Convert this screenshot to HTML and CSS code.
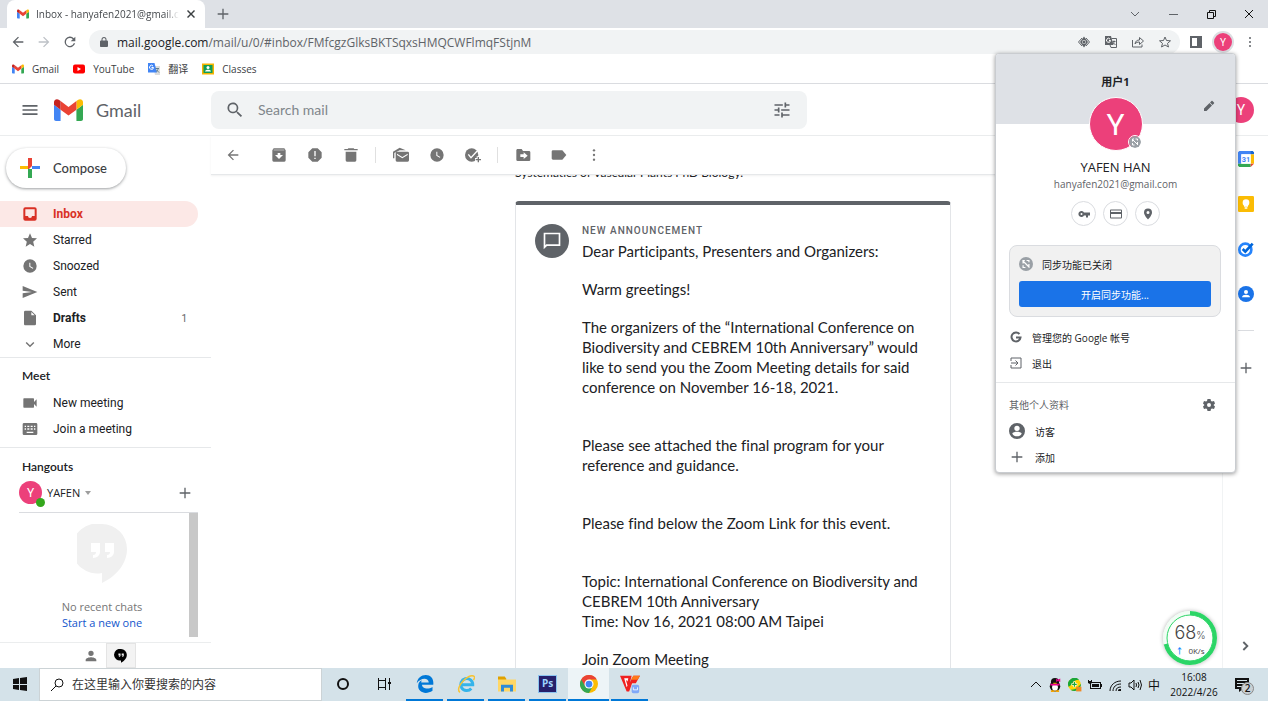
FILE: index.html
```html
<!DOCTYPE html>
<html lang="zh">
<head>
    <meta charset="UTF-8">
    <meta name="viewport" content="width=device-width, initial-scale=1.0">
    <title>Inbox - hanyafen2021@gmail.com</title>
    <link rel="stylesheet" href="styles.css">
</head>
<body>

<!-- 共用图标 -->
<svg class="sprite" aria-hidden="true">
    <symbol id="gmail" viewBox="0 0 88 66">
        <path fill="#4285f4" d="M6 66h14V32L0 17v43c0 3.300 2.700 6 6 6"/>
        <path fill="#34a853" d="M68 66h14c3.300 0 6-2.700 6-6V17L68 32"/>
        <path fill="#fbbc04" d="M68 6v26l20-15V9c0-7.400-8.500-11.600-14.400-7.200"/>
        <path fill="#ea4335" d="M20 32V6l24 18L68 6v26L44 50"/>
        <path fill="#c5221f" d="M0 9v8l20 15V6l-5.600-4.200C8.500-2.600 0 1.600 0 9"/>
    </symbol>
    <symbol id="back" viewBox="0 0 24 24"><path d="M20 11H7.800l5.600-5.600L12 4l-8 8 8 8 1.400-1.400L7.800 13H20z"/></symbol>
    <symbol id="close" viewBox="0 0 24 24"><path d="M20 6 18 4l-6 6-6-6-2 2 6 6-6 6 2 2 6-6 6 6 2-2-6-6z"/></symbol>
    <symbol id="plus" viewBox="0 0 24 24"><path d="M20 13h-7v7h-2v-7H4v-2h7V4h2v7h7z"/></symbol>
    <symbol id="more" viewBox="0 0 24 24"><circle cx="12" cy="4" r="2"/><circle cx="12" cy="12" r="2"/><circle cx="12" cy="20" r="2"/></symbol>
    <symbol id="clock" viewBox="0 0 24 24"><path d="M12 2a10 10 0 1 0 0 20 10 10 0 0 0 0-20m4.200 14.200L11 13V7h1.500v5.200l4.500 2.700z"/></symbol>
    <symbol id="person" viewBox="0 0 24 24"><path d="M12 12a4 4 0 1 0 0-8 4 4 0 0 0 0 8m0 2c-2.700 0-8 1.300-8 4v2h16v-2c0-2.700-5.300-4-8-4"/></symbol>
    <symbol id="hangouts" viewBox="0 0 50 60"><path fill-rule="evenodd" d="M25 0a25 25 0 1 0 0 49v10c15-7 25-20 25-34A25 25 0 0 0 25 0M14 19h9v9c0 3-3 6-7 6v-3c2 0 3-1 3-3h-5zm14 0h9v9c0 3-3 6-7 6v-3c2 0 3-1 3-3h-5z"/></symbol>
    <symbol id="nosync" viewBox="0 0 24 24"><circle cx="12" cy="12" r="12" fill="#9aa0a6"/><path fill="none" stroke="#fff" stroke-width="2" d="M6 6l12 12M10 6H7v5M7 14v4h4M17 18v-6M17 9V6h-4"/></symbol>
</svg>

<!-- 浏览器标签栏 -->
<div class="tabstrip">
    <div class="tab">
        <svg class="i12"><use href="#gmail"/></svg>
        <span class="tab-title">Inbox - hanyafen2021@gmail.com</span>
        <button class="icon-btn" aria-label="关闭标签页"><svg class="i12"><use href="#close"/></svg></button>
    </div>
    <button class="icon-btn new-tab" aria-label="打开新的标签页"><svg class="i16"><use href="#plus"/></svg></button>
    <div class="window-btns">
        <button class="icon-btn" aria-label="搜索标签页"><svg class="i12" viewBox="0 0 12 12"><path class="line" d="M2 4l4 4 4-4"/></svg></button>
        <button class="icon-btn" aria-label="最小化"><svg class="i12" viewBox="0 0 12 12"><path class="line" d="M2 6.500h9"/></svg></button>
        <button class="icon-btn" aria-label="还原"><svg class="i12 dark" viewBox="0 0 12 12"><path class="line" d="M2.500 4.500h6v6h-6zM4.500 4V2.500h6v6H9"/></svg></button>
        <button class="icon-btn" aria-label="关闭"><svg class="i12 dark" viewBox="0 0 12 12"><path class="line" d="M2 2l8 8M10 2l-8 8"/></svg></button>
    </div>
</div>

<!-- 地址栏 -->
<div class="toolbar">
    <button class="icon-btn" aria-label="后退"><svg class="i16"><use href="#back"/></svg></button>
    <button class="icon-btn forward" aria-label="前进"><svg class="i16"><use href="#back"/></svg></button>
    <button class="icon-btn" aria-label="刷新"><svg class="i16" viewBox="0 0 24 24"><path d="M17.700 6.300A8 8 0 1 0 19.700 14h-2.100A6 6 0 1 1 12 6c1.700 0 3.100.7 4.200 1.800L13 11h7V4z"/></svg></button>
    <div class="omnibox">
        <svg class="i12" viewBox="0 0 24 24"><path d="M18 9h-1V7A5 5 0 0 0 7 7v2H6a2 2 0 0 0-2 2v9c0 1.100.9 2 2 2h12a2 2 0 0 0 2-2v-9a2 2 0 0 0-2-2M9 7a3 3 0 0 1 6 0v2H9z"/></svg>
        <span class="url"><b>mail.google.com</b>/mail/u/0/#inbox/FMfcgzGlksBKTSqxsHMQCWFlmqFStjnM</span>
        <button class="icon-btn" aria-label="隐私"><svg class="i12" viewBox="0 0 24 24"><path fill="none" stroke="currentColor" stroke-width="2" d="M8 4l-7 8 7 8M16 4l7 8-7 8"/><path fill-rule="evenodd" d="M12 1 4 12l8 11 8-11zm0 7a4 4 0 1 1 0 8 4 4 0 0 1 0-8"/><circle cx="12" cy="12" r="3"/></svg></button>
        <button class="icon-btn" aria-label="翻译此页"><svg class="i12" viewBox="0 0 24 24"><path d="M0 0h12l5 18H0z"/><path fill="none" stroke="currentColor" stroke-width="2" d="M13 5h10v18H12l-2-5M15 11h6M18 9v2c0 3-2 5-4 6M16 13l5 5"/><path fill="none" stroke="#fff" stroke-width="2" d="M10 6a4 4 0 1 0 1 3H8"/></svg></button>
        <button class="icon-btn" aria-label="分享"><svg class="i12" viewBox="0 0 24 24"><path fill="none" stroke="currentColor" stroke-width="2" d="M1 8v14h19v-5M6 16c1-6 4-8 9-8V3l8 7-8 7v-5c-4 0-7 1-9 4z"/></svg></button>
        <button class="icon-btn" aria-label="收藏"><svg class="i12" viewBox="0 0 24 24"><path fill="none" stroke="currentColor" stroke-width="2" d="M12 2l3 7 8 .6-6 5.200L19 22l-7-4-7 4 2-7.200-6-5.200L9 9z"/></svg></button>
    </div>
    <button class="icon-btn" aria-label="侧边栏"><svg class="i12" viewBox="0 0 12 12"><path fill-rule="evenodd" d="M0 0h12v12H0zm2 2v8h5V2z"/></svg></button>
    <button class="avatar avatar-small">Y</button>
    <button class="icon-btn" aria-label="菜单"><svg class="i12"><use href="#more"/></svg></button>
</div>

<!-- 书签栏 -->
<nav class="bookmarks">
    <a href="#"><svg class="i12"><use href="#gmail"/></svg>Gmail</a>
    <a href="#"><svg class="i12" viewBox="0 0 24 24"><rect y="3" width="24" height="18" rx="4" fill="#f00"/><path fill="#fff" d="M9 8v8l7-4z"/></svg>YouTube</a>
    <a href="#"><svg class="i12" viewBox="0 0 24 24"><path fill="#ddd" d="M10 6h14v18H14z"/><path fill="#4285f4" d="M0 0h13l5 19H0z"/><path fill="none" stroke="#fff" stroke-width="2" d="M10 6a4 4 0 1 0 1 3H7"/><path fill="none" stroke="#607d8b" stroke-width="2" d="M15 11h7M20 11c0 3-2 5-3 6M17 14l5 5"/></svg>翻译</a>
    <a href="#"><svg class="i12" viewBox="0 0 24 24"><path fill="#f4b400" d="M0 1h24v22H0z"/><path fill="#0f9d58" d="M3 4h18v16H3z"/><circle cx="12" cy="9" r="3" fill="#fff"/><path fill="#fff" d="M6 17c0-5 12-5 12 0z"/></svg>Classes</a>
</nav>

<!-- Gmail 页面 -->
<div class="app">
    <header class="header">
        <button class="icon-btn" aria-label="Main menu"><svg class="i20" viewBox="0 0 24 24"><path d="M3 18h18v-2H3zm0-5h18v-2H3zm0-7v2h18V6z"/></svg></button>
        <a class="brand" href="#"><svg class="brand-logo"><use href="#gmail"/></svg>Gmail</a>
        <form class="search">
            <svg class="i20" viewBox="0 0 24 24"><path d="M15.500 14h-.8l-.3-.3A6.500 6.500 0 1 0 13.700 14.400l.3.300v.8l5 5 1.500-1.500zm-6 0a4.500 4.500 0 1 1 0-9 4.500 4.500 0 0 1 0 9"/></svg>
            <input type="text" placeholder="Search mail" aria-label="Search mail">
            <button type="button" class="icon-btn" aria-label="Search options"><svg class="i20" viewBox="0 0 24 24"><path d="M3 17v2h6v-2zM3 5v2h10V5zm10 16v-2h8v-2h-8v-2h-2v6zM7 9v2H3v2h4v2h2V9zm14 4v-2H11v2zm-6-4h2V7h4V5h-4V3h-2z"/></svg></button>
        </form>
        <button class="avatar avatar-account">Y</button>
    </header>

    <div class="workspace">
        <aside class="sidebar">
            <button class="compose">
                <svg class="i20" viewBox="0 0 20 20"><path fill="#ea4335" d="M8 0h4v8l-4 4z"/><path fill="#4285f4" d="M12 8h8v3h-8z"/><path fill="#34a853" d="M8 11h4v9H8z"/><path fill="#fbbc04" d="M0 8h8v3H0z"/></svg>
                Compose
            </button>
            <nav class="folders">
                <a class="row active" href="#"><svg class="i16" viewBox="0 0 24 24"><path d="M19 2H5a3 3 0 0 0-3 3v14a3 3 0 0 0 3 3h14a3 3 0 0 0 3-3V5a3 3 0 0 0-3-3m0 13h-4a3 3 0 0 1-6 0H5V5h14z"/></svg>Inbox</a>
                <a class="row" href="#"><svg class="i16" viewBox="0 0 24 24"><path d="M12 18l6.500 4-1.700-7.500 5.700-5-7.500-.6L12 2 9 8.900l-7.500.6 5.700 5L5.500 22z"/></svg>Starred</a>
                <a class="row" href="#"><svg class="i16"><use href="#clock"/></svg>Snoozed</a>
                <a class="row" href="#"><svg class="i16" viewBox="0 0 24 24"><path d="M1 21l22-9L1 3v7l14 2-14 2z"/></svg>Sent</a>
                <a class="row drafts" href="#"><svg class="i16" viewBox="0 0 24 24"><path d="M14 1H5a2 2 0 0 0-2 2v18c0 1.100.9 2 2 2h14a2 2 0 0 0 2-2V8zm0 7V3l5 5z"/></svg>Drafts<span class="count">1</span></a>
                <a class="row" href="#"><svg class="i16" viewBox="0 0 24 24"><path d="M17 9l-5 5-5-5-1.500 1.500L12 17l6.500-6.500z"/></svg>More</a>
            </nav>
            <section class="meet">
                <h2>Meet</h2>
                <a class="row" href="#"><svg class="i16" viewBox="0 0 24 24"><path d="M18 10.500V6a1 1 0 0 0-1-1H3a1 1 0 0 0-1 1v12c0 .6.400 1 1 1h14a1 1 0 0 0 1-1v-4.500l4 4v-11z"/></svg>New meeting</a>
                <a class="row" href="#"><svg class="i16" viewBox="0 0 24 24"><path fill-rule="evenodd" d="M3 3h18a2 2 0 0 1 2 2v14a2 2 0 0 1-2 2H3a2 2 0 0 1-2-2V5c0-1.100.9-2 2-2m1 4v2h2V7zm4 0v2h3V7zm5 0v2h3V7zm5 0v2h2V7zM4 11v2h2v-2zm4 0v2h3v-2zm5 0v2h3v-2zm5 0v2h2v-2zM7 16v2h10v-2z"/></svg>Join a meeting</a>
            </section>
            <section class="hangouts">
                <h2>Hangouts</h2>
                <div class="hangouts-user">
                    <span class="avatar avatar-chat">Y<i class="online"></i></span>
                    YAFEN
                    <svg class="caret" viewBox="0 0 6 4"><path d="M0 0h6L3 4z"/></svg>
                    <button class="icon-btn" aria-label="New conversation"><svg class="i16"><use href="#plus"/></svg></button>
                </div>
                <div class="chats">
                    <div class="chats-empty">
                        <svg class="chats-logo"><use href="#hangouts"/></svg>
                        <p>No recent chats</p>
                        <a href="#">Start a new one</a>
                    </div>
                    <div class="scrollbar"></div>
                </div>
            </section>
            <div class="chat-tabs">
                <button class="icon-btn" aria-label="Contacts"><svg class="i16"><use href="#person"/></svg></button>
                <button class="icon-btn selected" aria-label="Hangouts"><svg class="i14"><use href="#hangouts"/></svg></button>
            </div>
        </aside>

        <main class="mail">
            <div class="actions">
                <button class="icon-btn act-back" aria-label="Back to Inbox"><svg class="i16"><use href="#back"/></svg></button>
                <button class="icon-btn" aria-label="Archive"><svg class="i16" viewBox="0 0 24 24"><path fill-rule="evenodd" d="M4 2h16l2 3v15a2 2 0 0 1-2 2H4a2 2 0 0 1-2-2V5zm0 2v1h16V4zm6 5v3H6l6 6 6-6h-4V9z"/></svg></button>
                <button class="icon-btn" aria-label="Report spam"><svg class="i16" viewBox="0 0 24 24"><path fill-rule="evenodd" d="M8 2h8l6 6v8l-6 6H8l-6-6V8zm3 4v8h2V6zm0 10v2h2v-2z"/></svg></button>
                <button class="icon-btn" aria-label="Delete"><svg class="i16" viewBox="0 0 24 24"><path d="M4 7h16v13a2 2 0 0 1-2 2H6a2 2 0 0 1-2-2zM8 2h8l1 1h5v2H2V3h5z"/></svg></button>
                <span class="sep"></span>
                <button class="icon-btn" aria-label="Mark as unread"><svg class="i16" viewBox="0 0 24 24"><path d="M0 17V7l10-6 9 4h-9L2 9v8z"/><path fill-rule="evenodd" d="M6 7h16a2 2 0 0 1 2 2v11a2 2 0 0 1-2 2H6a2 2 0 0 1-2-2V9c0-1.100.9-2 2-2m0 3v2l8 5 8-5v-2l-8 5z"/></svg></button>
                <button class="icon-btn" aria-label="Snooze"><svg class="i16"><use href="#clock"/></svg></button>
                <button class="icon-btn" aria-label="Add to tasks"><svg class="i16" viewBox="0 0 24 24"><circle cx="10" cy="12" r="10"/><path fill="none" stroke="#fff" stroke-width="2" d="M5 11l4 5L21 3"/><path stroke="#fff" stroke-width="5" d="M20 14v10M15 19h9"/><path fill="none" stroke="currentColor" stroke-width="2" d="M20 15v8M16 19h8"/></svg></button>
                <span class="sep"></span>
                <button class="icon-btn" aria-label="Move to"><svg class="i16" viewBox="0 0 24 24"><path fill-rule="evenodd" d="M4 3h6l2 3h9a2 2 0 0 1 2 2v11a2 2 0 0 1-2 2H4a2 2 0 0 1-2-2V5c0-1.100.9-2 2-2m9 5v3H8v4h5v3l6-5z"/></svg></button>
                <button class="icon-btn" aria-label="Labels"><svg class="i16" viewBox="0 0 24 24"><path d="M17 5H3a2 2 0 0 0-2 2v10c0 1.100.9 2 2 2h14l6-7z"/></svg></button>
                <button class="icon-btn" aria-label="More"><svg class="i14"><use href="#more"/></svg></button>
            </div>
            <div class="message">
                <div class="message-inner">
                    <p class="cut-line">Systematics of Vascular Plants PhD Biology.</p>
                    <article class="card">
                        <span class="card-icon"><svg class="i20" viewBox="0 0 24 24"><path d="M20 2H2v20l4-4h16V2zm0 14H5l-1 1V4h16z"/></svg></span>
                        <div class="card-body">
                            <h3>NEW ANNOUNCEMENT</h3>
                            <p>Dear Participants, Presenters and Organizers:</p>
                            <p>Warm greetings!</p>
                            <p class="wide">The organizers of the “International Conference on<br>Biodiversity and CEBREM 10th Anniversary” would<br>like to send you the Zoom Meeting details for said<br>conference on November 16-18, 2021.</p>
                            <p class="wide">Please see attached the final program for your<br>reference and guidance.</p>
                            <p class="wide">Please find below the Zoom Link for this event.</p>
                            <p>Topic: International Conference on Biodiversity and<br>CEBREM 10th Anniversary<br>Time: Nov 16, 2021 08:00 AM Taipei</p>
                            <p>Join Zoom Meeting</p>
                        </div>
                    </article>
                </div>
            </div>
        </main>

        <aside class="rail">
            <a href="#" aria-label="Calendar"><svg class="i16" viewBox="0 0 24 24"><path fill="#4285f4" d="M2 0h20v5H5v14H0V2z"/><path fill="#1967d2" d="M19 0h3l2 2v3h-5z"/><path fill="#fbbc04" d="M19 5h5v14h-5z"/><path fill="#34a853" d="M0 19h19v5H2l-2-2z"/><path fill="#ea4335" d="M19 19h5l-5 5z"/><path fill="#fff" d="M5 5h14v14H5z"/><text x="12" y="16" text-anchor="middle" font-size="11" font-weight="700" fill="#4285f4">31</text></svg></a>
            <a href="#" aria-label="Keep"><svg class="i16" viewBox="0 0 24 24"><rect width="24" height="24" rx="2" fill="#fbbc04"/><circle cx="12" cy="10" r="5" fill="#fff"/><path fill="#fff" d="M9 13h6v3H9zM10 17h4v2h-4z"/></svg></a>
            <a href="#" aria-label="Tasks"><svg class="i16" viewBox="0 0 24 24"><circle cx="11" cy="13" r="9" fill="none" stroke="#2684fc" stroke-width="4"/><path fill="none" stroke="#0066da" stroke-width="4" d="M7 12l4 4L22 4"/></svg></a>
            <a href="#" aria-label="Contacts"><svg class="i16" viewBox="0 0 24 24"><circle cx="12" cy="12" r="12" fill="#1a73e8"/><circle cx="12" cy="9" r="3" fill="#fff"/><path fill="#fff" d="M6 17c0-5 12-5 12 0z"/></svg></a>
            <hr>
            <button class="icon-btn" aria-label="Get add-ons"><svg class="i16"><use href="#plus"/></svg></button>
            <button class="icon-btn rail-toggle" aria-label="Hide side panel"><svg class="i16" viewBox="0 0 24 24"><path d="M7 7 9 5l7 7-7 7-2-2 5-5z"/></svg></button>
        </aside>
    </div>
</div>

<!-- 任务栏 -->
<footer class="taskbar">
    <button class="task start" aria-label="开始"><svg class="i14" viewBox="0 0 14 14"><path d="M0 2l6-1v6H0zM7 1l7-1v7H7zM0 8h6v5l-6-1zM7 8h7v6l-7-1z"/></svg></button>
    <label class="task-search">
        <svg class="i14" viewBox="0 0 14 14"><circle class="line" cx="9" cy="5" r="4"/><path class="line" d="M6 8l-5 5"/></svg>
        <input type="text" placeholder="在这里输入你要搜索的内容">
    </label>
    <button class="task" aria-label="Cortana"><svg class="i14" viewBox="0 0 14 14"><circle cx="7" cy="7" r="5" fill="none" stroke="#111" stroke-width="2"/></svg></button>
    <button class="task" aria-label="任务视图"><svg class="i14" viewBox="0 0 14 14"><path class="line" d="M1.500 1v12M8.500 1v12M1 3.500h8M1 10.500h8M12.500 1v12"/><path d="M11 5h3v2h-3z"/></svg></button>
    <button class="task open" aria-label="Edge"><svg class="i18" viewBox="0 0 24 24"><path fill="#0078d7" d="M1 11C2 4 7 0 13 0c7 0 11 5 10 13H8c0 5 8 7 14 3v5C13 27 2 23 3 14c0-3 2-6 5-7-1 1-1 2-1 3h10c0-7-11-7-16 1"/></svg></button>
    <button class="task open" aria-label="Internet Explorer"><svg class="i18" viewBox="0 0 24 24"><path fill="none" stroke="#35b4ea" stroke-width="4" d="M6 13h15a8 8 0 1 0-2 5"/><path fill="none" stroke="#f6c437" stroke-width="2" d="M4 23C-4 18 16-4 23 2c1 1 0 3-1 5"/></svg></button>
    <button class="task open" aria-label="文件资源管理器"><svg class="i18" viewBox="0 0 24 24"><path fill="#e0a100" d="M0 2h9l2 3v4H0z"/><path fill="#ffd766" d="M0 6h24v16H0z"/><path fill="#2f8bd8" d="M4 22v-9h16v9h-4v-5H8v5z"/></svg></button>
    <button class="task open" aria-label="Photoshop"><span class="ps">Ps</span></button>
    <button class="task open current" aria-label="Chrome"><svg class="i18" viewBox="0 0 24 24"><circle cx="12" cy="12" r="12" fill="#fbbc04"/><path fill="#34a853" d="M1.600 6A12 12 0 0 0 12 24l5-9-5-3z"/><path fill="#ea4335" d="M12 6h10.400A12 12 0 0 0 1.600 6L7 15z"/><circle cx="12" cy="12" r="6" fill="#fff"/><circle cx="12" cy="12" r="4.500" fill="#4285f4"/></svg></button>
    <button class="task open" aria-label="WPS"><svg class="i20" viewBox="0 0 24 24"><path fill="#f02020" d="M0 2h14l-2 8 4-8h8l-5 9h-5l2-4L11 21H8z"/><path fill="#fff" d="M5 5h5l-1 4-2-2 2 7-1 2z"/><path fill="#ff7a1a" d="M16 2h8l-3 5h-8z"/><rect x="14" y="13" width="9" height="10" rx="2" fill="#7fa8f8"/><path fill="none" stroke="#fff" d="M16 16v3h5v-3"/></svg></button>

    <div class="tray">
        <button class="icon-btn dark" aria-label="显示隐藏的图标"><svg class="i12" viewBox="0 0 12 12"><path class="line" d="M1 8l5-5 5 5"/></svg></button>
        <svg class="i14" viewBox="0 0 24 24"><ellipse cx="12" cy="14" rx="9" ry="9" fill="#111"/><circle cx="12" cy="7" r="7" fill="#111"/><ellipse cx="12" cy="16" rx="5" ry="6" fill="#fff"/><path fill="#ec008c" d="M4 10h16v3H4zM14 1l3 2 4-2v6l-4-2-3 2z"/><path fill="#f7a600" d="M9 8h6v2H9zM5 21h6v3H5zM13 21h6v3h-6z"/></svg>
        <svg class="i14" viewBox="0 0 24 24"><circle cx="11" cy="11" r="11" fill="#ffd500"/><path fill="#19a63a" d="M1 15A11 11 0 0 1 19 3C8 3 8 12 1 15M4 20c8 1 14-4 18-10 1 8-8 16-18 10"/><path fill="#fff" d="M9 6h4v3h3v4h-3v3H9v-3H6V9h3z"/><path fill="#19a63a" d="M10 7h2v3h3v2h-3v3h-2v-3H7v-2h3z"/><path fill="#f08a24" d="M14 15h9v8h-9z"/></svg>
        <svg class="i14" viewBox="0 0 14 14"><path fill-rule="evenodd" d="M2 4h11v2h1v3h-1v2H2zm1 1v5h9V5z"/><path d="M4 6h7v3H4zM0 2h1v1h2V2h1v3L2 6 0 5z"/></svg>
        <svg class="i14" viewBox="0 0 14 14"><path class="line" d="M2 13C2 7 7 3 13 3M5 13c0-4 3-7 8-7M8 13c0-3 2-4 5-4"/><path d="M10 13c0-2 1-2 3-2v2z"/></svg>
        <svg class="i14" viewBox="0 0 14 14"><path class="line" d="M1 5h2l3-3v10L3 9H1zM8 5q1 2 0 4M10 4q2 3 0 6M12 2q3 5 0 10"/></svg>
        <span class="ime">中</span>
        <div class="datetime">16:08<br>2022/4/26</div>
        <button class="icon-btn notify" aria-label="通知"><svg class="i16" viewBox="0 0 16 16"><path fill-rule="evenodd" d="M1 1h14v11H9l-4 3v-3H1zm2 2v1h10V3zm0 3v1h10V6zm0 3v1h7V9z"/></svg><span class="badge">2</span></button>
    </div>
</footer>

<!-- 个人资料菜单 -->
<div class="profile">
    <div class="profile-band">
        用户1
        <button class="icon-btn" aria-label="编辑"><svg class="i12" viewBox="0 0 24 24"><path d="M2 17v5h5L18 11l-5-5zM22 7c.6-.6.6-1.400 0-2l-3-3c-.6-.6-1.400-.6-2 0l-3 3 5 5z"/></svg></button>
    </div>
    <div class="profile-card">
        <span class="avatar avatar-big">Y<svg class="sync-badge"><use href="#nosync"/></svg></span>
        <div class="profile-name">YAFEN HAN</div>
        <div class="profile-mail">hanyafen2021@gmail.com</div>
        <div class="shortcuts">
            <button aria-label="密码"><svg class="i12" viewBox="0 0 24 24"><path fill-rule="evenodd" d="M12 9a6 6 0 1 0 0 6h4v4h4v-4h4V9zm-5 1a2 2 0 1 1 0 4 2 2 0 0 1 0-4"/></svg></button>
            <button aria-label="付款方式"><svg class="i12" viewBox="0 0 24 24"><path fill-rule="evenodd" d="M2 3h20a2 2 0 0 1 2 2v14a2 2 0 0 1-2 2H2a2 2 0 0 1-2-2V5c0-1.100.9-2 2-2m0 2v3h20V5zm0 7v7h20v-7z"/></svg></button>
            <button aria-label="地址"><svg class="i12" viewBox="0 0 24 24"><path fill-rule="evenodd" d="M12 1a8 8 0 0 0-8 8c0 6 8 14 8 14s8-8 8-14a8 8 0 0 0-8-8m0 5a3 3 0 1 1 0 6 3 3 0 0 1 0-6"/></svg></button>
        </div>
    </div>
    <div class="sync">
        <div class="sync-state"><svg class="i14"><use href="#nosync"/></svg>同步功能已关闭</div>
        <button class="sync-btn">开启同步功能...</button>
    </div>
    <button class="menu-item"><svg class="i12" viewBox="0 0 24 24"><path fill="none" stroke="currentColor" stroke-width="4" d="M19 6a9 9 0 1 0 2 7h-9"/></svg>管理您的 Google 帐号</button>
    <button class="menu-item"><svg class="i12" viewBox="0 0 24 24"><path fill="none" stroke="currentColor" stroke-width="2" d="M2 8V2h20v20H2v-6M2 12h13M11 7l5 5-5 5"/></svg>退出</button>
    <div class="others">
        <span>其他个人资料</span>
        <button class="icon-btn" aria-label="管理个人资料"><svg class="i12" viewBox="0 0 24 24"><path fill-rule="evenodd" d="M9 0h6l1 4 2 1 4-1 2 5-3 3 3 3-2 5-4-1-2 1-1 4H9l-1-4-2-1-4 1-2-5 3-3-3-3 2-5 4 1 2-1zm3 8a4 4 0 1 0 0 8 4 4 0 0 0 0-8"/></svg></button>
    </div>
    <button class="menu-item other"><svg class="i16" viewBox="0 0 24 24"><path fill-rule="evenodd" d="M12 0a12 12 0 1 0 0 24 12 12 0 0 0 0-24m0 4a4 4 0 1 1 0 8 4 4 0 0 1 0-8m0 16c-3 0-5.500-1.400-7-4 0-2.300 4.700-3 7-3s7 .7 7 3c-1.500 2.600-4 4-7 4"/></svg>访客</button>
    <button class="menu-item other"><svg class="i16"><use href="#plus"/></svg>添加</button>
</div>

<!-- 网速悬浮球 -->
<div class="speed">
    <svg class="speed-ring" viewBox="0 0 54 54"><circle cx="27" cy="27" r="25" fill="none" stroke="#2bd566" stroke-width="4" stroke-dasharray="111 157" transform="rotate(-90 27 27)"/><circle cx="27" cy="27" r="23" fill="none" stroke="#2bd566"/></svg>
    <div class="speed-value">68<small>%</small></div>
    <div class="speed-rate"><b>↑</b>0K/s</div>
</div>

</body>
</html>
```
FILE: styles.css
```css
* {
    box-sizing: border-box;
}
body {
    margin: 0;
    height: 100vh;
    display: flex;
    flex-direction: column;
    overflow: hidden;
    position: relative;
    background-color: #fff;
    color: #202124;
    font-family: 'Open Sans', 'Noto Sans CJK SC', sans-serif;
    font-size: 11px;
}
button, input {
    font-family: inherit;
    font-size: inherit;
    color: inherit;
    border: none;
    background: none;
    padding: 0;
    margin: 0;
    outline: none;
}
button {
    cursor: pointer;
}
a {
    color: inherit;
    text-decoration: none;
}
p, h2, h3 {
    margin: 0;
}
svg {
    display: block;
    flex-shrink: 0;
    fill: currentColor;
}
.sprite {
    position: absolute;
    width: 0;
    height: 0;
}
.line {
    fill: none;
    stroke: currentColor;
}
.i12 { width: 12px; height: 12px; }
.i14 { width: 14px; height: 14px; }
.i16 { width: 16px; height: 16px; }
.i18 { width: 18px; height: 18px; }
.i20 { width: 20px; height: 20px; }
.icon-btn {
    display: flex;
    align-items: center;
    justify-content: center;
    flex-shrink: 0;
    color: #5f6368;
}
.dark {
    color: #111;
}
.avatar {
    display: flex;
    align-items: center;
    justify-content: center;
    flex-shrink: 0;
    border-radius: 50%;
    background-color: #ec407a;
    color: #fff;
    font-family: Roboto, sans-serif;
}

/* 标签栏 */
.tabstrip {
    display: flex;
    align-items: center;
    height: 28px;
    flex-shrink: 0;
    padding-left: 7px;
    background-color: #dee1e6;
}
.tab {
    display: flex;
    align-items: center;
    width: 198px;
    height: 28px;
    padding: 0 8px 0 10px;
    border-radius: 8px 8px 0 0;
    background-color: #fff;
}
.tab-title {
    flex: 1;
    margin: 0 6px 0 7px;
    overflow: hidden;
    white-space: nowrap;
    color: #45494d;
    font-size: 10px;
    mask-image: linear-gradient(to right, #000 90%, transparent);
}
.tab .icon-btn {
    color: #3c4043;
}
.new-tab {
    margin-left: 10px;
}
.window-btns {
    display: flex;
    gap: 26px;
    margin-left: auto;
    padding-right: 13px;
}

/* 地址栏 */
.toolbar {
    display: flex;
    align-items: center;
    gap: 10px;
    height: 28px;
    flex-shrink: 0;
    padding: 0 12px 0 10px;
}
.forward {
    color: #bdc1c6;
    transform: scaleX(-1);
}
.omnibox {
    display: flex;
    align-items: center;
    flex: 1;
    gap: 15px;
    height: 24px;
    margin-left: 1px;
    padding: 0 9px;
    border-radius: 12px;
    background-color: #f1f3f4;
    color: #5f6368;
}
.omnibox > svg {
    margin-right: -8px;
}
.url {
    flex: 1;
    font-size: 12px;
    white-space: nowrap;
    overflow: hidden;
}
.url b {
    font-weight: 400;
    color: #202124;
}
.avatar-small {
    width: 18px;
    height: 18px;
    margin: 0 2px;
    font-size: 10px;
    box-shadow: 0 0 0 2px #dcdee2;
}
.bookmarks {
    display: flex;
    align-items: center;
    gap: 14px;
    height: 28px;
    flex-shrink: 0;
    padding: 0 12px 2px;
    border-bottom: 1px solid #dadce0;
    color: #3c4043;
    font-size: 10px;
}
.bookmarks a {
    display: flex;
    align-items: center;
    gap: 8px;
}

/* Gmail */
.app {
    display: flex;
    flex-direction: column;
    flex: 1;
    min-height: 0;
    font-family: Roboto, sans-serif;
}
.header {
    display: flex;
    align-items: center;
    height: 52px;
    flex-shrink: 0;
    padding: 0 14px 0 20px;
    border-bottom: 1px solid #ebedee;
}
.brand {
    display: flex;
    align-items: center;
    gap: 13px;
    width: 157px;
    margin-left: 14px;
    color: #5f6368;
    font-family: Lato, sans-serif;
    font-size: 18px;
}
.brand-logo {
    width: 29px;
    height: 22px;
}
.search {
    display: flex;
    align-items: center;
    width: 47vw;
    height: 38px;
    padding: 0 15px 0 14px;
    border-radius: 8px;
    background-color: #f1f3f4;
    color: #5f6368;
}
.search input {
    flex: 1;
    min-width: 0;
    margin-left: 13px;
    font-family: Lato, sans-serif;
    font-size: 14px;
}
.search input::placeholder {
    color: #80868b;
}
.avatar-account {
    width: 26px;
    height: 26px;
    margin-left: auto;
    font-size: 14px;
}
.workspace {
    display: flex;
    flex: 1;
    min-height: 0;
}

/* 左侧栏 */
.sidebar {
    display: flex;
    flex-direction: column;
    width: 211px;
    flex-shrink: 0;
    font-size: 12px;
}
.compose {
    display: flex;
    align-items: center;
    gap: 13px;
    width: 120px;
    height: 40px;
    margin: 12px 0 13px 6px;
    padding-left: 14px;
    flex-shrink: 0;
    border-radius: 20px;
    color: #3c4043;
    font-family: Lato, sans-serif;
    font-size: 13px;
    font-weight: 500;
    box-shadow: 0 1px 3px rgba(60, 64, 67, 0.5);
}
.row {
    display: flex;
    align-items: center;
    gap: 15px;
    height: 26px;
    margin-right: 13px;
    padding: 0 11px 0 22px;
    border-radius: 0 13px 13px 0;
}
.row svg {
    color: #747474;
}
.row.active {
    background-color: #fce8e6;
    color: #d93025;
    font-weight: 700;
}
.row.active svg {
    color: #d93025;
}
.drafts {
    font-weight: 700;
}
.count {
    margin-left: auto;
    color: #5f6368;
    font-size: 10px;
    font-weight: 400;
}
.meet, .hangouts {
    border-top: 1px solid #e6e8ea;
}
.meet {
    padding-bottom: 5px;
}
.sidebar h2 {
    padding: 8px 22px 4px;
    font-family: Lato, sans-serif;
    font-size: 12px;
    font-weight: 600;
    line-height: 20px;
}
.hangouts {
    display: flex;
    flex-direction: column;
    flex: 1;
    min-height: 0;
    padding-top: 1px;
}
.hangouts-user {
    display: flex;
    align-items: center;
    gap: 5px;
    height: 32px;
    flex-shrink: 0;
    margin: 0 13px 0 19px;
    padding-bottom: 8px;
    border-bottom: 1px solid #dadce0;
    font-family: 'Open Sans', sans-serif;
    font-size: 11px;
}
.hangouts-user .icon-btn {
    margin: 0 5px 0 auto;
}
.avatar-chat {
    position: relative;
    width: 23px;
    height: 23px;
    font-size: 12px;
}
.online {
    position: absolute;
    right: -3px;
    bottom: -3px;
    width: 9px;
    height: 9px;
    border-radius: 50%;
    background-color: #34a71c;
}
.caret {
    width: 6px;
    height: 4px;
    color: #9e9e9e;
}
.chats {
    display: flex;
    flex: 1;
    min-height: 0;
    margin: 0 13px 5px 19px;
}
.chats-empty {
    display: flex;
    flex-direction: column;
    align-items: center;
    flex: 1;
    padding: 11px 4px 0 0;
    color: #757575;
    font-family: 'Open Sans', sans-serif;
    font-size: 11px;
    line-height: 16px;
}
.chats-logo {
    width: 50px;
    height: 60px;
    margin-bottom: 15px;
    color: #f0f0f0;
}
.chats-empty a {
    color: #1155cc;
}
.scrollbar {
    width: 9px;
    background-color: #c8c8c8;
}
.chat-tabs {
    display: flex;
    justify-content: center;
    height: 26px;
    flex-shrink: 0;
    border-top: 1px solid #ebedee;
}
.chat-tabs .icon-btn {
    width: 30px;
    color: #757575;
}
.chat-tabs .selected {
    border: 1px solid #e4e4e4;
    background-color: #f3f3f3;
    color: #000;
}

/* 邮件内容 */
.mail {
    display: flex;
    flex-direction: column;
    flex: 1;
    min-width: 0;
}
.actions {
    display: flex;
    align-items: center;
    gap: 20px;
    height: 39px;
    flex-shrink: 0;
    padding-left: 14px;
    border-bottom: 1px solid #e6e8ea;
    box-shadow: 0 1px 2px rgba(0, 0, 0, 0.06);
}
.actions .icon-btn {
    color: #757575;
}
.act-back {
    margin-right: 10px;
}
.sep {
    width: 1px;
    height: 16px;
    margin: 0 -3px 0 -4px;
    background-color: #e0e0e0;
}
.message {
    flex: 1;
    min-height: 0;
    overflow: hidden;
    padding-left: 33px;
}
.message-inner {
    display: flex;
    flex-direction: column;
    width: 436px;
    max-width: 100%;
    margin: 0 auto;
    font-family: Lato, sans-serif;
    font-variant-ligatures: none;
}
.cut-line {
    margin: -12px 0 18px;
    font-size: 12px;
    line-height: 20px;
}
.card {
    display: flex;
    gap: 13px;
    padding: 19px 20px 40px 19px;
    border: 1px solid #e3e5e8;
    border-top: 4px solid #5f6368;
    border-radius: 4px 4px 0 0;
}
.card-icon {
    display: flex;
    align-items: center;
    justify-content: center;
    width: 34px;
    height: 34px;
    flex-shrink: 0;
    border-radius: 50%;
    background-color: #5f6368;
    color: #fff;
}
.card-body {
    white-space: nowrap;
    font-size: 15px;
    line-height: 20px;
}
.card-body h3 {
    margin-bottom: 4px;
    color: #5f6368;
    font-family: Roboto, sans-serif;
    font-size: 10px;
    font-weight: 500;
    line-height: 13px;
    letter-spacing: 1px;
}
.card-body p {
    margin-bottom: 18px;
}
.card-body p.wide {
    margin-bottom: 38px;
}

/* 右侧栏 */
.rail {
    display: flex;
    flex-direction: column;
    align-items: center;
    gap: 29px;
    width: 46px;
    flex-shrink: 0;
    padding: 15px 0 14px;
    border-left: 1px solid #f1f3f4;
}
.rail hr {
    width: 16px;
    margin: -1px 0 0;
    border: none;
    border-top: 1px solid #dadce0;
}
.rail-toggle {
    margin-top: auto;
}

/* 任务栏 */
.taskbar {
    display: flex;
    height: 33px;
    flex-shrink: 0;
    background-color: #d4e2e9;
    color: #111;
}
.task {
    display: flex;
    align-items: center;
    justify-content: center;
    width: 41px;
    flex-shrink: 0;
    border-bottom: 2px solid transparent;
}
.task.start {
    width: 39px;
}
.task.open {
    border-image: linear-gradient(to right, transparent 4px, #0078d7 4px, #0078d7 37px, transparent 37px) 2;
}
.task.current {
    border-image: none;
    border-bottom-color: #0078d7;
    background-color: #edf4f7;
}
.task-search {
    display: flex;
    align-items: center;
    gap: 8px;
    width: 283px;
    padding-left: 10px;
    border: 1px solid #ccd3d6;
    background-color: #fff;
}
.task-search input {
    flex: 1;
    min-width: 0;
    font-size: 12px;
}
.task-search input::placeholder {
    color: #333;
}
.ps {
    width: 19px;
    height: 18px;
    border: 1px solid #8cc4f0;
    background-color: #26206b;
    color: #9fd4ff;
    font-size: 10px;
    font-weight: 700;
    line-height: 15px;
}
.tray {
    display: flex;
    align-items: center;
    gap: 6px;
    margin-left: auto;
    padding-right: 18px;
}
.ime {
    font-size: 12px;
}
.datetime {
    width: 56px;
    text-align: center;
    font-size: 10px;
    line-height: 15px;
}
.notify {
    position: relative;
    margin-left: 6px;
    color: #111;
}
.badge {
    position: absolute;
    left: 7px;
    top: 5px;
    width: 13px;
    height: 13px;
    border: 1px solid #888;
    border-radius: 50%;
    background-color: #c9d0d4;
    font-size: 10px;
    font-weight: 600;
    line-height: 11px;
}

/* 个人资料菜单 */
.profile {
    position: absolute;
    top: 53px;
    right: 32px;
    width: 241px;
    padding-bottom: 2px;
    border: 1px solid #c9ccd0;
    border-radius: 4px;
    background-color: #fff;
    box-shadow: 0 1px 4px rgba(0, 0, 0, 0.4);
    font-size: 10px;
}
.profile-band {
    position: relative;
    height: 70px;
    padding-top: 19px;
    border-radius: 3px 3px 0 0;
    background-color: #dee1e6;
    text-align: center;
    font-size: 11px;
    font-weight: 700;
    line-height: 18px;
}
.profile-band .icon-btn {
    position: absolute;
    right: 20px;
    bottom: 12px;
}
.profile-card {
    position: relative;
    display: flex;
    flex-direction: column;
    align-items: center;
    margin-top: -27px;
}
.avatar-big {
    position: relative;
    width: 54px;
    height: 54px;
    border: 1px solid #fff;
    font-size: 30px;
}
.sync-badge {
    position: absolute;
    right: 0;
    bottom: 1px;
    width: 14px;
    height: 14px;
    border: 1px solid #fff;
    border-radius: 50%;
}
.profile-name {
    margin-top: 7px;
    font-size: 13px;
    line-height: 18px;
}
.profile-mail {
    color: #5f6368;
    font-size: 10px;
    line-height: 16px;
}
.shortcuts {
    display: flex;
    gap: 7px;
    margin-top: 9px;
}
.shortcuts button {
    display: flex;
    align-items: center;
    justify-content: center;
    width: 25px;
    height: 25px;
    border: 1px solid #dadce0;
    border-radius: 50%;
    color: #5f6368;
}
.sync {
    margin: 19px 14px 7px 13px;
    padding: 9px;
    border: 1px solid #dadce0;
    border-radius: 8px;
    background-color: #f1f1f1;
}
.sync-state {
    display: flex;
    align-items: center;
    gap: 9px;
    height: 18px;
    margin-bottom: 8px;
}
.sync-btn {
    display: block;
    width: 100%;
    height: 26px;
    border-radius: 3px;
    background-color: #1a73e8;
    color: #fff;
}
.menu-item {
    display: flex;
    align-items: center;
    gap: 10px;
    width: 100%;
    height: 26px;
    padding-left: 14px;
}
.menu-item svg {
    color: #5f6368;
}
.menu-item.other {
    padding-left: 13px;
}
.others {
    display: flex;
    align-items: center;
    justify-content: space-between;
    height: 36px;
    margin-top: 6px;
    padding: 8px 20px 0 13px;
    border-top: 1px solid #e6e8ea;
    color: #5f6368;
}

/* 网速悬浮球 */
.speed {
    position: absolute;
    right: 51px;
    bottom: 36px;
    width: 54px;
    height: 54px;
    padding-top: 11px;
    border-radius: 50%;
    background: radial-gradient(#fff 50%, #d4f7de);
    box-shadow: 0 0 4px rgba(0, 0, 0, 0.3);
    text-align: center;
    color: #444;
}
.speed-ring {
    position: absolute;
    inset: 0;
}
.speed-value {
    font-family: Inter, sans-serif;
    font-size: 18px;
    font-weight: 300;
    line-height: 22px;
}
.speed-value small {
    font-size: 10px;
}
.speed-rate {
    font-size: 8px;
    line-height: 10px;
}
.speed-rate b {
    margin-right: 5px;
    color: #1a8cff;
}
```
